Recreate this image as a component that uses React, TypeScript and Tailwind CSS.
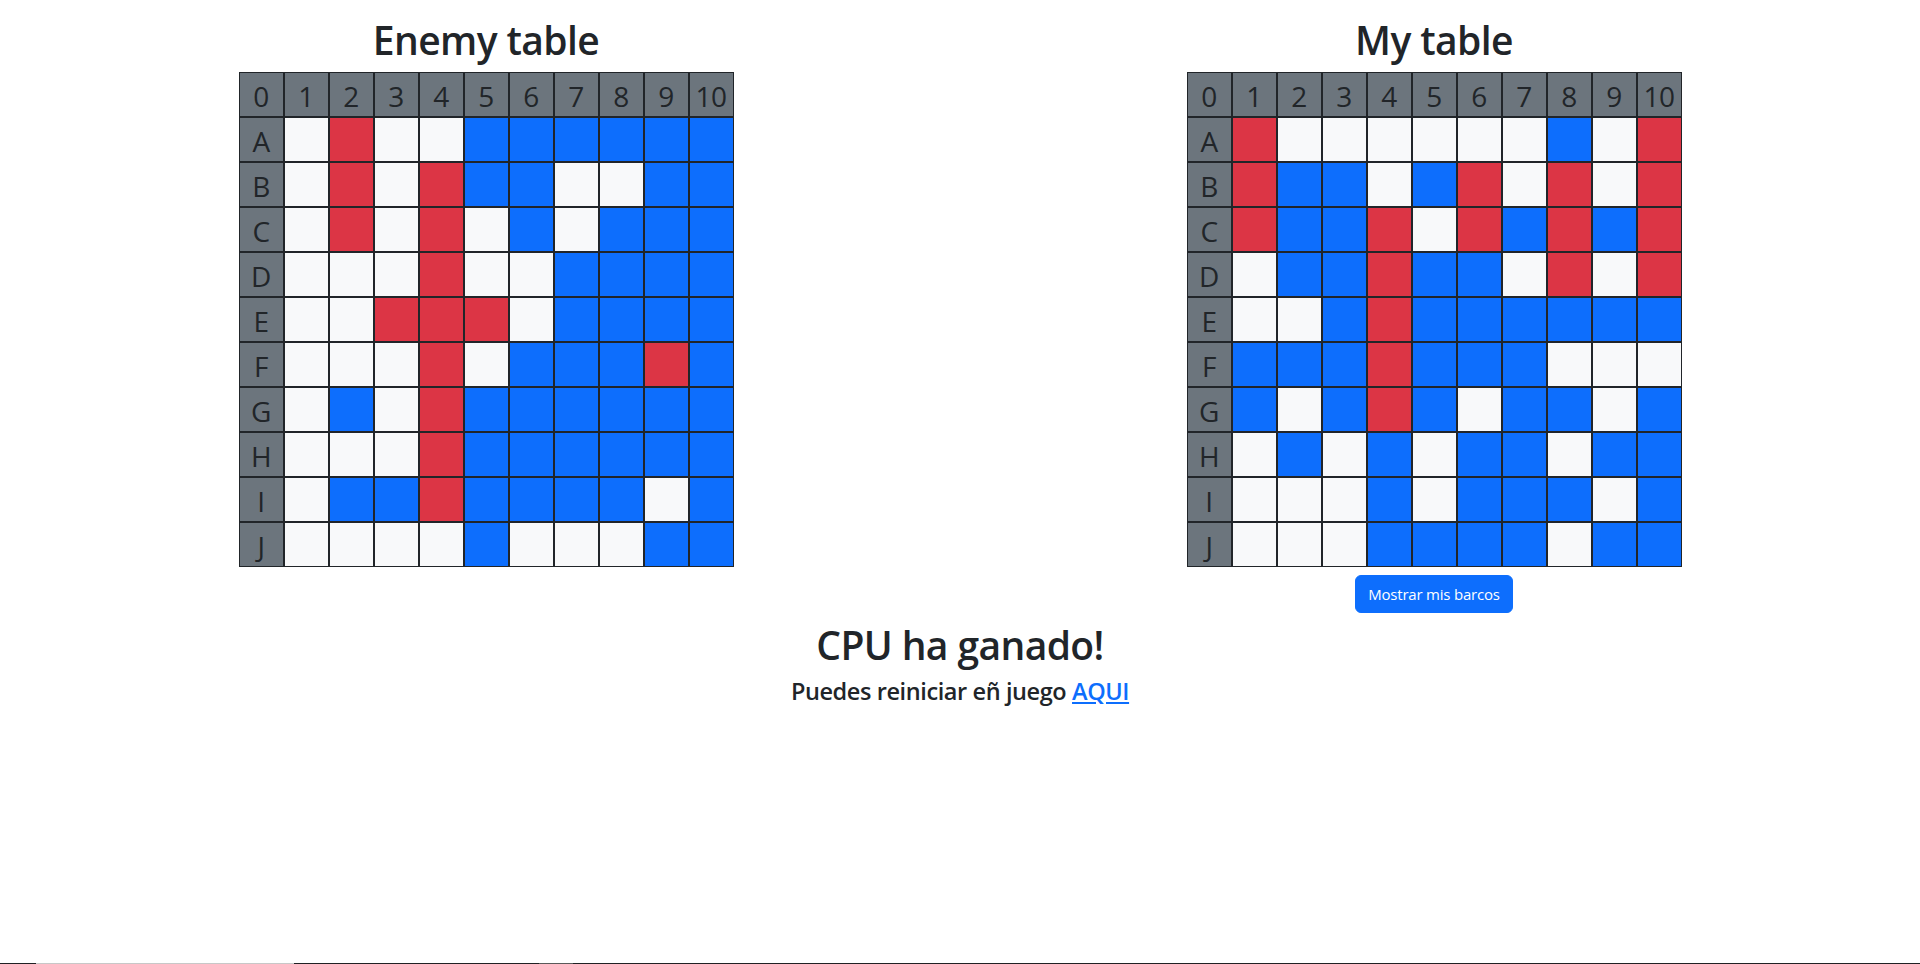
import React from "react";

type C = "W" | "R" | "B";

const enemy: string[] = [
  "WRWWBBBBBB",
  "WRWRBBWWBB",
  "WRWRWBWBBB",
  "WWWRWWBBBB",
  "WWRRRWBBBB",
  "WWWRWBBBRB",
  "WBWRBBBBBB",
  "WWWRBBBBBB",
  "WBBRBBBBWB",
  "WWWWBWWWBB",
];

const mine: string[] = [
  "RWWWWWWBWR",
  "RBBWBRWRWR",
  "RBBRWRBRBR",
  "WBBRBBWRWR",
  "WWBRBBBBBB",
  "BBBRBBBWWW",
  "BWBRBWBBWB",
  "WBWBWBBWBB",
  "WWWBWBBBWB",
  "WWWBBBBWBB",
];

const letters = ["A", "B", "C", "D", "E", "F", "G", "H", "I", "J"];

const cellColor: Record<C, string> = {
  W: "bg-[#f8f9fa]",
  R: "bg-[#dc3545]",
  B: "bg-[#0d6efd]",
};

function HeadCell({ label }: { label: string }) {
  return (
    <div className="h-[43px] bg-[#6c757d] flex items-center justify-center text-[28px] leading-none text-[#212529] pt-[3px] tracking-[-0.5px]">
      {label}
    </div>
  );
}

function Board({ rows }: { rows: string[] }) {
  const header = ["0", "1", "2", "3", "4", "5", "6", "7", "8", "9", "10"];
  return (
    <div className="grid grid-cols-[repeat(11,43px)] gap-[2px] p-px bg-[#212529]">
      {header.map((h) => (
        <HeadCell key={"h" + h} label={h} />
      ))}
      {rows.map((row, r) => (
        <React.Fragment key={r}>
          <HeadCell label={letters[r]} />
          {row.split("").map((c, i) => (
            <div key={i} className={"h-[43px] " + cellColor[c as C]} />
          ))}
        </React.Fragment>
      ))}
    </div>
  );
}

export default function App() {
  return (
    <div
      className="min-h-screen bg-white text-[#212529]"
      style={{ fontFamily: '"Open Sans", "Noto Sans", Arial, sans-serif' }}
    >
      <div className="grid grid-cols-2 px-3 pt-4">
        <div className="flex flex-col items-center">
          <h1 className="text-[39px] leading-[48px] font-semibold tracking-[-0.6px] mb-2">Enemy table</h1>
          <Board rows={enemy} />
        </div>
        <div className="flex flex-col items-center">
          <h1 className="text-[39px] leading-[48px] font-semibold tracking-[-0.6px] mb-2">My table</h1>
          <Board rows={mine} />
          <button className="mt-2 px-3 py-1.5 text-[15px] leading-6 tracking-[-0.2px] rounded-md bg-[#0d6efd] text-white border border-[#0d6efd]">
            Mostrar mis barcos
          </button>
        </div>
      </div>
      <div className="text-center mt-2">
        <h1 className="text-[39px] leading-[48px] font-semibold tracking-[-0.6px] mb-2">CPU ha ganado!</h1>
        <h4 className="text-[23.5px] leading-[28.8px] font-semibold tracking-[-0.4px]">
          Puedes reiniciar eñ juego{" "}
          <a href="#" className="text-[#0d6efd] underline">
            AQUI
          </a>
        </h4>
      </div>
      <div className="fixed bottom-0 left-0 right-0 h-px bg-[#202124] flex">
        <div className="ml-[36px] w-[258px] h-px bg-[#c8c8c8]" />
        <div className="ml-[245px] w-[34px] h-px bg-[#5a5a5a]" />
      </div>
    </div>
  );
}
